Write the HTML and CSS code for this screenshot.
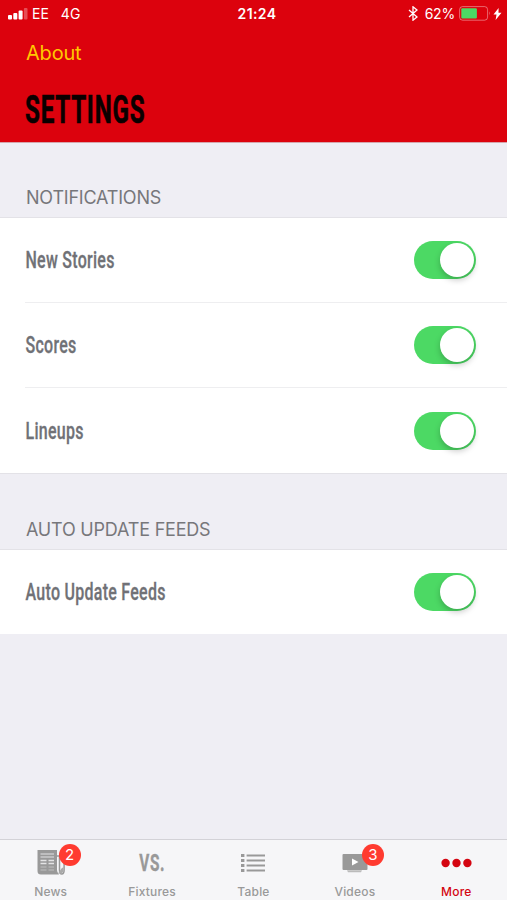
FILE: index.html
```html
<!DOCTYPE html>
<html lang="en">
<head>
  <meta charset="UTF-8" />
  <meta name="viewport" content="width=device-width, initial-scale=1.0"/>
  <title>Settings</title>
  <link rel="stylesheet" href="styles.css">
</head>
<body>

  <header class="header">
    <div class="status">
      <div class="status-left">
        <svg class="signal" width="20" height="12" viewBox="0 0 20 12" fill="#fff">
          <rect x="0" y="7" width="4" height="4.5" rx="1"/>
          <rect x="5.3" y="5" width="4" height="6.5" rx="1"/>
          <rect x="10.6" y="2.5" width="4" height="9" rx="1"/>
          <rect x="15.9" y="0" width="3.6" height="11.5" rx="1" opacity=".3"/>
        </svg>
        <span>EE</span>
        <span class="network">4G</span>
      </div>
      <div class="time">21:24</div>
      <div class="status-right">
        <svg class="bluetooth" width="10" height="15" viewBox="0 0 10 15" fill="none" stroke="#fff" stroke-width="1.3">
          <path d="M1 4l8 7-4 3.2V.8L9 4l-8 7"/>
        </svg>
        <span>62%</span>
        <svg class="battery" width="32" height="15" viewBox="0 0 32 15">
          <rect x=".6" y=".6" width="28" height="13.6" rx="3" fill="none" stroke="#fff" stroke-opacity=".4"/>
          <rect x="2.3" y="2.3" width="15.6" height="10.2" rx="1" fill="#4cd964"/>
          <path d="M30 5.2q1.6 2.2 0 4.4z" fill="#fff" opacity=".5"/>
        </svg>
        <svg class="bolt" width="9" height="12" viewBox="0 0 9 12" fill="#fff">
          <path d="M5.6 0L.5 6.6h3L2.6 12l5.9-7.2h-3z"/>
        </svg>
      </div>
    </div>
    <a class="about">About</a>
    <h1>SETTINGS</h1>
  </header>

  <main>
    <h2>NOTIFICATIONS</h2>
    <ul>
      <li><span class="label">New Stories</span><i class="toggle"></i></li>
      <li><span class="label">Scores</span><i class="toggle"></i></li>
      <li><span class="label">Lineups</span><i class="toggle"></i></li>
    </ul>
    <h2>AUTO UPDATE FEEDS</h2>
    <ul>
      <li><span class="label">Auto Update Feeds</span><i class="toggle"></i></li>
    </ul>
  </main>

  <nav class="tabs">
    <a class="tab">
      <div class="icon news">
        <svg width="28" height="27" viewBox="0 0 28 27">
          <path d="M.5 1H20v20q0 2.5 2 4.5H4Q.5 25.5.5 22z" fill="#999"/>
          <path d="M20 7h2.500v14q0 4 2.300 4t2.300-4V9.500" fill="none" stroke="#999" stroke-width="1.500"/>
          <path d="M21 24.500h4l1.500-2.500v-4l-2 1.500z" fill="#aaa"/>
          <path d="M3.500 5h13.500M3.500 8h13.500" stroke="#e4e4e5" stroke-width="1.200"/>
          <path d="M3.500 11.500h6M3.500 14.500h6M11.500 11.500H17M11.500 14.500H17" stroke="#e4e4e5" stroke-width="1.400"/>
          <path d="M3.500 18h6M3.500 21h6M11.500 18H17M11.500 21H17" stroke="#b2b2b3" stroke-width="1.400"/>
        </svg>
        <b class="badge">2</b>
      </div>
      <span>News</span>
    </a>
    <a class="tab">
      <div class="icon"><span class="vs">VS.</span></div>
      <span>Fixtures</span>
    </a>
    <a class="tab">
      <div class="icon">
        <svg width="24" height="20" viewBox="0 0 24 20" fill="#999">
          <path d="M0 1h3.400v3H0zM0 6h3.400v3H0zM0 11h3.400v3H0zM0 16h3.400v3H0zM5.600 1.400H24v2.200H5.600zM5.600 6.400H24v2.200H5.600zM5.600 11.400H24v2.200H5.600zM5.600 16.400H24v2.200H5.600z"/>
        </svg>
      </div>
      <span>Table</span>
    </a>
    <a class="tab">
      <div class="icon videos">
        <svg width="26" height="20" viewBox="0 0 26 20">
          <rect x=".5" y="1" width="25" height="16" rx="1" fill="#999"/>
          <path d="M5 17.300h15l-1 2H6z" fill="#bbb"/>
          <path d="M10 5.500v7l6.500-3.500z" fill="#fff"/>
        </svg>
        <b class="badge">3</b>
      </div>
      <span>Videos</span>
    </a>
    <a class="tab active">
      <div class="icon">
        <svg width="31" height="10" viewBox="0 0 31 10" fill="#d40511">
          <circle cx="4.600" cy="5" r="4.200"/>
          <circle cx="15.500" cy="5" r="4.200"/>
          <circle cx="26.400" cy="5" r="4.200"/>
        </svg>
      </div>
      <span>More</span>
    </a>
  </nav>

</body>
</html>
```
FILE: styles.css
```css
:root {
  --red: #dc020d;
  --green: #4cd964;
  --gray: #999;
  --bg: #efeef4;
}

* {
  box-sizing: border-box;
  margin: 0;
  padding: 0;
}

body {
  font-family: Inter, 'Liberation Sans', sans-serif;
  background: var(--bg);
  height: 900px;
  overflow: hidden;
  display: flex;
  flex-direction: column;
}

.header {
  height: 143px;
  background: var(--red);
  border-bottom: 1px solid #d5a5ac;
}

.status {
  height: 27px;
  padding: 0 5px 0 8px;
  display: grid;
  grid-template-columns: 1fr auto 1fr;
  align-items: center;
  color: #fff;
  font-size: 14px;
}

.status-left, .status-right {
  display: flex;
  align-items: center;
}

.status-left span {
  margin-left: 4px;
}

.status-left .network {
  margin-left: 12px;
}

.status-right {
  justify-content: flex-end;
  letter-spacing: -0.2px;
}

.bluetooth {
  margin-right: 7px;
}

.battery {
  margin: 0 2px 0 4px;
}

.time {
  margin-left: 4px;
  font-weight: 600;
  font-size: 14px;
  letter-spacing: 0.4px;
}

.about {
  display: block;
  height: 52px;
  padding-left: 26px;
  line-height: 52px;
  font-size: 20px;
  letter-spacing: -0.2px;
  color: #ffc800;
}

h1 {
  width: max-content;
  margin-left: 25px;
  font: 700 39px/61px Roboto, sans-serif;
  letter-spacing: 1.2px;
  color: #0a0000;
  -webkit-text-stroke: 0.6px #0a0000;
  transform: translateY(1px) scaleX(0.62);
  transform-origin: left;
}

h2 {
  height: 75px;
  padding: 35px 0 0 26px;
  font-size: 18px;
  line-height: 42px;
  font-weight: 400;
  letter-spacing: -0.2px;
  color: #77777b;
}

h2:first-child {
  height: 74px;
  padding-top: 34px;
}

ul {
  list-style: none;
  background: #fff;
  border-top: 1px solid #e3e2e7;
}

ul:first-of-type {
  border-bottom: 1px solid #e3e2e7;
}

li {
  height: 84px;
  margin-left: 25px;
  padding-right: 31px;
  display: flex;
  align-items: center;
  justify-content: space-between;
}

li + li {
  height: 85px;
  border-top: 1px solid #eeeef0;
}

li + li + li {
  height: 86px;
}

.label {
  font: 500 23px/28px Roboto, sans-serif;
  letter-spacing: 0.4px;
  color: #707176;
  -webkit-text-stroke: 0.3px #707176;
  transform: translate(0.5px, 0.5px) scaleX(0.695);
  transform-origin: left;
}

.toggle {
  width: 62px;
  height: 38px;
  padding: 2px;
  border-radius: 19px;
  background: var(--green);
  display: flex;
  justify-content: flex-end;
}

.toggle::after {
  content: "";
  width: 34px;
  height: 34px;
  border-radius: 50%;
  background: #fff;
  box-shadow: 0 3px 6px rgba(0, 0, 0, 0.22);
}

.tabs {
  height: 61px;
  margin-top: auto;
  background: #f6f6f8;
  border-top: 1px solid #d3d2d7;
  display: grid;
  grid-template-columns: repeat(5, 1fr);
}

.tab {
  display: flex;
  flex-direction: column;
  align-items: center;
  font-size: 12px;
  line-height: 14px;
  font-weight: 500;
  letter-spacing: 0.2px;
  color: var(--gray);
}

.icon {
  position: relative;
  height: 45px;
  display: flex;
  align-items: center;
}

.vs {
  font: 700 24px/30px Roboto, sans-serif;
  letter-spacing: 1px;
  -webkit-text-stroke: 0.4px var(--gray);
  transform: scaleX(0.64);
}

.badge {
  position: absolute;
  top: 4px;
  width: 22px;
  height: 22px;
  border-radius: 50%;
  background: #ff3b30;
  color: #fff;
  font-size: 15px;
  line-height: 22px;
  font-weight: 400;
  text-align: center;
}

.news .badge {
  left: 22px;
}

.videos .badge {
  left: 20px;
}

.active {
  color: #d40511;
}
```
